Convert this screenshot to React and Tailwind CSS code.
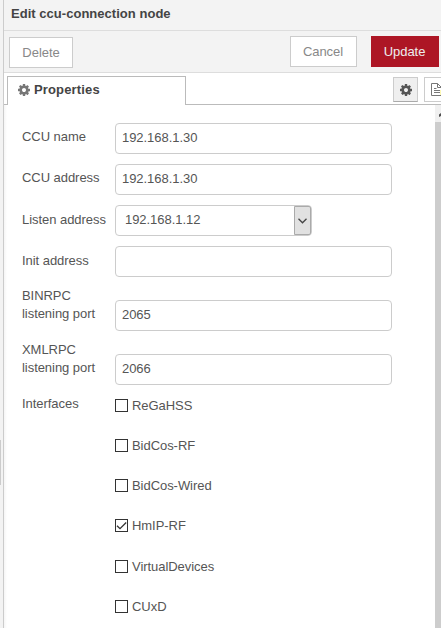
function Cog({ className }) {
  return (
    <svg viewBox="128 128 1536 1536" className={className} fill="currentColor">
      <path d="M1152 896q0-106-75-181t-181-75-181 75-75 181 75 181 181 75 181-75 75-181zm512-109v222q0 12-8 23t-20 13l-185 28q-19 54-39 91 35 50 107 138 10 12 10 25t-9 23q-27 37-99 108t-94 71q-12 0-26-9l-138-108q-44 23-91 38-16 136-29 186-7 28-36 28h-222q-14 0-24.5-8.5t-11.5-21.5l-28-184q-49-16-90-37l-141 107q-10 9-25 9-14 0-25-11-126-114-165-168-7-10-7-23 0-12 8-23 15-21 51-66.5t54-70.5q-27-50-41-99l-183-27q-13-2-21-12.5t-8-23.5v-222q0-12 8-23t19-13l186-28q14-46 39-92-40-57-107-138-10-12-10-24 0-10 9-23 26-36 98.5-107.5t94.5-71.5q13 0 26 10l138 107q44-23 91-38 16-136 29-186 7-28 36-28h222q14 0 24.5 8.5t11.5 21.5l28 184q49 16 90 37l142-107q9-9 24-9 13 0 25 10 129 119 165 170 7 8 7 22 0 12-8 23-15 21-51 66.5t-54 70.5q26 50 41 98l183 28q13 2 21 12.5t8 23.5z" />
    </svg>
  );
}

const inputBox = "flex h-[31px] w-[277px] items-center rounded-[4px] border border-[#ccc] bg-white pl-[6px] pb-px text-[#555]";

function Row({ label, value, className }) {
  return (
    <div className={`flex ${className}`}>
      <div className="w-[93px] shrink-0 whitespace-nowrap pt-[5px] leading-[18px]">{label}</div>
      <div className={inputBox}>{value}</div>
    </div>
  );
}

function PortRow({ label, value, className }) {
  return (
    <div className={`flex items-end ${className}`}>
      <div className="flex h-[44px] w-[93px] shrink-0 flex-col whitespace-nowrap leading-[18px]">
        <span>{label}</span>
        <span>listening port</span>
      </div>
      <div className={inputBox}>{value}</div>
    </div>
  );
}

function Check({ label, checked, className }) {
  return (
    <div className={`flex h-[14px] items-start whitespace-nowrap ${className}`}>
      <span className="h-[13px] w-[13px] shrink-0 border border-[#333] bg-white">
        {checked && (
          <svg viewBox="0 0 11 11" className="h-[11px] w-[11px]" fill="none" stroke="#333" strokeWidth="1.3">
            <path d="M1 5.7 4 8.7 10.2 2.5" />
          </svg>
        )}
      </span>
      <span className="ml-[4px] leading-[14px]">{label}</span>
    </div>
  );
}

export default function App() {
  return (
    <div className="flex h-[628px] w-[441px] overflow-hidden bg-white font-['Liberation_Sans',Arial,sans-serif] text-[13px] tracking-[-0.05px] text-[#555]">
      <div className="flex w-[4px] shrink-0 flex-col border-r border-[#ccc] bg-[#f3f3f3] pt-[440px]">
        <div className="h-[45px] w-px bg-[#ccc]" />
      </div>
      <div className="flex w-[437px] shrink-0 flex-col">
        <div className="h-[31px] shrink-0 border-b border-[#ddd] bg-[#f3f3f3] pl-[7px] pt-[4px] font-bold leading-[19px] tracking-[0.03px] text-[#444]">
          Edit ccu-connection node
        </div>
        <div className="flex h-[42px] shrink-0 items-start border-b border-[#ddd] bg-[#f3f3f3] pl-[5px] pt-[5px] text-[#888]">
          <button className="mt-px flex h-[31px] w-[64px] items-center justify-center border border-[#ccc] bg-white">Delete</button>
          <button className="ml-[217px] flex h-[31px] w-[67px] items-center justify-center border border-[#ccc] bg-white pr-px">Cancel</button>
          <button className="ml-[14px] flex h-[31px] w-[68px] items-center justify-center bg-[#ad1625] pr-px text-[#eee]">Update</button>
        </div>
        <div className="flex h-[32px] shrink-0 bg-white">
          <div className="w-[3px] shrink-0 border-b border-[#bbb]" />
          <div className="mt-[3px] flex w-[179px] shrink-0 items-center border border-b-0 border-[#bbb] pb-[2px] pl-[10px] text-[#444]">
            <Cog className="h-[12px] w-[12px] text-[#777]" />
            <span className="ml-[4px] font-bold tracking-[0.15px]">Properties</span>
          </div>
          <div className="flex flex-1 items-start justify-end overflow-hidden border-b border-[#bbb] pt-[4px]">
            <div className="flex h-[25px] w-[25px] shrink-0 items-center justify-center border border-[#ccc] border-b-[#aaa] bg-[#efefef]">
              <Cog className="h-[12px] w-[12px] text-[#555]" />
            </div>
            <div className="ml-[6px] flex h-[25px] w-[17px] shrink-0 items-center border border-r-0 border-[#ccc] pl-[6px]">
              <svg viewBox="0 0 10 13" className="h-[13px] w-[10px]" fill="none" stroke="#777">
                <path d="M9 7H10V12H9Z" fill="#fdf9b4" stroke="none" />
                <path d="M10 12.5H.5V.5H6.500L10 4M6.500 .5V4.500H10M3 5.500H5.500M3 7.500H9M3 9.500H9" />
              </svg>
            </div>
          </div>
        </div>
        <div className="flex min-h-0 flex-1">
          <div className="w-[431px] shrink-0 bg-linear-to-r from-[#f5f5f5] to-white to-[3px] pl-[18px] pt-[18px]">
            <Row label="CCU name" value="192.168.1.30" className="h-[41px]" />
            <Row label="CCU address" value="192.168.1.30" className="h-[41px]" />
            <div className="flex h-[41px]">
              <div className="w-[93px] shrink-0 whitespace-nowrap pt-[6px] leading-[18px]">Listen address</div>
              <div className="flex h-[31px] w-[197px] justify-between rounded-[4px] border border-[#ccc]">
                <span className="pl-[9px] leading-[28px]">192.168.1.12</span>
                <span className="flex w-[17px] items-center justify-center rounded-r-[2px] border border-[#aaa] bg-[#e1e1e1]">
                  <svg viewBox="0 0 9 6" className="h-[6px] w-[9px]" fill="none" stroke="#444" strokeWidth="1.3">
                    <path d="M.5 .8 4.500 4.800 8.500 .8" />
                  </svg>
                </span>
              </div>
            </div>
            <div className="flex h-[41px]">
              <div className="w-[93px] shrink-0 whitespace-nowrap pt-[6px] leading-[18px]">Init address</div>
              <div className={inputBox} />
            </div>
            <PortRow label="BINRPC" value="2065" className="h-[44px]" />
            <PortRow label="XMLRPC" value="2066" className="mt-[11px] h-[43px]" />
            <div className="flex pt-[10px]">
              <div className="w-[93px] shrink-0 leading-[18px]">Interfaces</div>
              <div className="flex flex-col pt-[4px]">
                <Check label="ReGaHSS" className="mb-[26px]" />
                <Check label="BidCos-RF" className="mb-[26px]" />
                <Check label="BidCos-Wired" className="mb-[26px]" />
                <Check label="HmIP-RF" checked className="mb-[27px]" />
                <Check label="VirtualDevices" className="mb-[26px]" />
                <Check label="CUxD" />
              </div>
            </div>
          </div>
          <div className="flex w-[6px] shrink-0 flex-col bg-[#cdcdcd]">
            <div className="flex h-[17px] justify-end bg-[#f0f0f0] pt-[8px]">
              <svg viewBox="0 0 2 4" className="h-[4px] w-[2px]" fill="#505050">
                <path d="M0 1.500 2 0V3L0 4Z" />
              </svg>
            </div>
          </div>
        </div>
      </div>
    </div>
  );
}
